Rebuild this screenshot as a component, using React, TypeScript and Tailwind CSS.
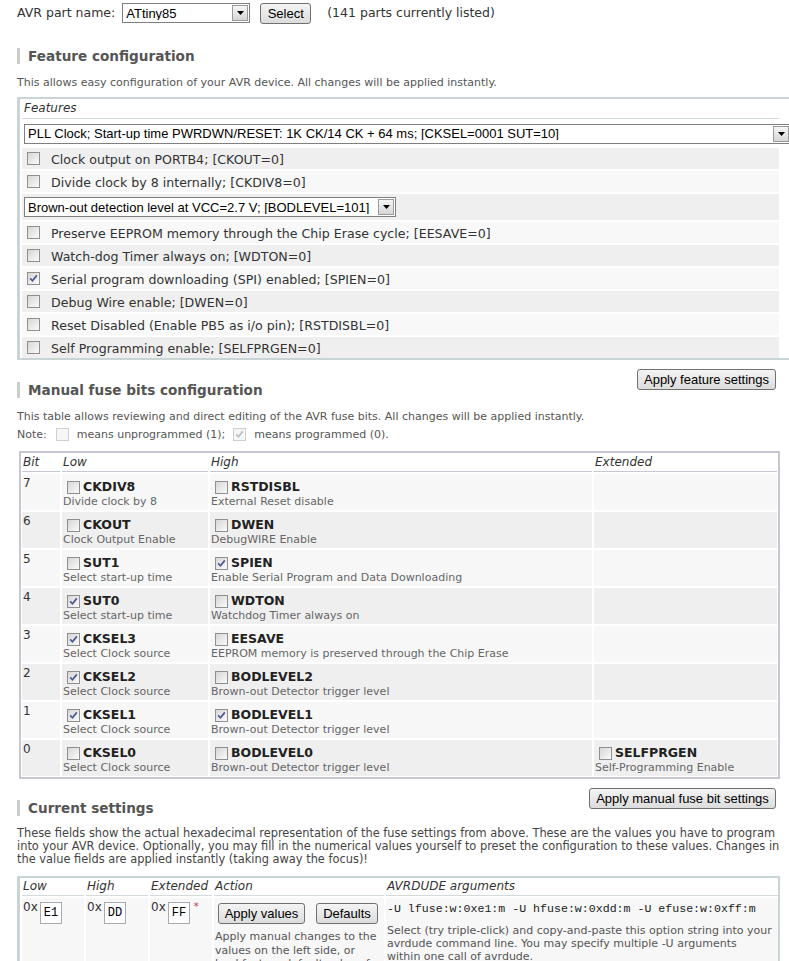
import type { ReactNode } from "react";

const FEATURES: { label: string; checked?: boolean; select?: boolean }[] = [
  { label: "Clock output on PORTB4; [CKOUT=0]" },
  { label: "Divide clock by 8 internally; [CKDIV8=0]" },
  { label: "Brown-out detection level at VCC=2.7 V; [BODLEVEL=101]", select: true },
  { label: "Preserve EEPROM memory through the Chip Erase cycle; [EESAVE=0]" },
  { label: "Watch-dog Timer always on; [WDTON=0]" },
  { label: "Serial program downloading (SPI) enabled; [SPIEN=0]", checked: true },
  { label: "Debug Wire enable; [DWEN=0]" },
  { label: "Reset Disabled (Enable PB5 as i/o pin); [RSTDISBL=0]" },
  { label: "Self Programming enable; [SELFPRGEN=0]" },
];

type Bit = { name: string; desc: string; checked?: boolean } | null;

const BITS: { bit: number; low: Bit; high: Bit; ext: Bit }[] = [
  { bit: 7, low: { name: "CKDIV8", desc: "Divide clock by 8" }, high: { name: "RSTDISBL", desc: "External Reset disable" }, ext: null },
  { bit: 6, low: { name: "CKOUT", desc: "Clock Output Enable" }, high: { name: "DWEN", desc: "DebugWIRE Enable" }, ext: null },
  { bit: 5, low: { name: "SUT1", desc: "Select start-up time" }, high: { name: "SPIEN", desc: "Enable Serial Program and Data Downloading", checked: true }, ext: null },
  { bit: 4, low: { name: "SUT0", desc: "Select start-up time", checked: true }, high: { name: "WDTON", desc: "Watchdog Timer always on" }, ext: null },
  { bit: 3, low: { name: "CKSEL3", desc: "Select Clock source", checked: true }, high: { name: "EESAVE", desc: "EEPROM memory is preserved through the Chip Erase" }, ext: null },
  { bit: 2, low: { name: "CKSEL2", desc: "Select Clock source", checked: true }, high: { name: "BODLEVEL2", desc: "Brown-out Detector trigger level" }, ext: null },
  { bit: 1, low: { name: "CKSEL1", desc: "Select Clock source", checked: true }, high: { name: "BODLEVEL1", desc: "Brown-out Detector trigger level", checked: true }, ext: null },
  { bit: 0, low: { name: "CKSEL0", desc: "Select Clock source" }, high: { name: "BODLEVEL0", desc: "Brown-out Detector trigger level" }, ext: { name: "SELFPRGEN", desc: "Self-Programming Enable" } },
];

function Box({ checked, dim }: { checked?: boolean; dim?: boolean }) {
  return (
    <span
      className={`inline-flex h-[13px] w-[13px] shrink-0 items-center justify-center border ${
        dim
          ? "border-[#cfcfcf] bg-[#f6f6f6]"
          : "border-[#8e8f8f] bg-linear-to-br from-[#d6d6d6] to-[#fbfbfb]"
      }`}
    >
      {checked && (
        <svg width="9" height="9" viewBox="0 0 9 9">
          <path d="M1.2 4.4 L3.5 6.8 L7.8 1.4" fill="none" stroke={dim ? "#bdbdbd" : "#4b5a8f"} strokeWidth="1.7" />
        </svg>
      )}
    </span>
  );
}

function Button({ children, className = "" }: { children: ReactNode; className?: string }) {
  return (
    <button
      className={`flex h-[21px] shrink-0 items-center justify-center whitespace-nowrap rounded-[3px] border border-[#707070] bg-linear-to-b from-[#f4f4f4] to-[#dcdcdc] px-0 font-['Liberation_Sans',Arial,sans-serif] text-[13px] leading-none text-black ${className}`}
    >
      {children}
    </button>
  );
}

function Select({ value, className = "" }: { value: string; className?: string }) {
  return (
    <div className={`flex h-[20px] items-center border border-[#7f7f7f] bg-white ${className}`}>
      <span className="flex-1 truncate pl-[3px] font-['Liberation_Sans',Arial,sans-serif] text-[13px] leading-none text-black">
        {value}
      </span>
      <span className="mr-[1px] flex h-[16px] w-[16px] items-center justify-center border border-[#9a9a9a] bg-linear-to-b from-[#f6f6f6] to-[#d6d6d6]">
        <svg width="7" height="4" viewBox="0 0 7 4">
          <path d="M0 0h7L3.5 4z" fill="#000" />
        </svg>
      </span>
    </div>
  );
}

function Heading({ children, className = "" }: { children: ReactNode; className?: string }) {
  return (
    <h2 className={`whitespace-nowrap border-l-[3px] border-[#cccccc] pl-[8px] text-[13.6px] font-bold leading-[16px] text-[#555] ${className}`}>
      {children}
    </h2>
  );
}

function BitCell({ b, shade }: { b: Bit; shade: string }) {
  return (
    <div className={`${shade} pl-[1px]`}>
      {b && (
        <>
          <div className="mt-[6px] flex items-center gap-[3px] pl-[4px]">
            <Box checked={b.checked} />
            <span className="text-[12.5px] font-bold leading-[14px] text-[#222]">{b.name}</span>
          </div>
          <div className="mt-[1px] whitespace-nowrap text-[11px] leading-[13px] text-[#666]">{b.desc}</div>
        </>
      )}
    </div>
  );
}

export default function App() {
  return (
    <div className="min-h-[961px] w-[789px] overflow-hidden bg-white pl-[17px] pt-[3px] font-['DejaVu_Sans',Verdana,sans-serif] text-[#333]">
      <div className="flex h-[20px] items-center text-[12.5px]">
        <span>AVR part name:</span>
        <Select value="ATtiny85" className="ml-[7px] w-[128px]" />
        <Button className="ml-[10px] h-[20px] w-[51px]">Select</Button>
        <span className="ml-[16px]">(141 parts currently listed)</span>
      </div>

      <Heading className="mt-[25px]">Feature configuration</Heading>
      <p className="mt-[12px] text-[11px] leading-[13px] text-[#555]">
        This allows easy configuration of your AVR device. All changes will be applied instantly.
      </p>

      <div className="mt-[8px] w-[772px] border-y-2 border-l-[3px] border-[#c9d4d6] pl-[2px]">
        <div className="mr-[10px] flex flex-col gap-[2px]">
          <div className="h-[20px] border-b border-[#d3dadc] pl-[2px] text-[12px] italic leading-[19px]">Features</div>
          <div className="flex h-[25px] items-center bg-white pl-[2px]">
            <Select
              value="PLL Clock; Start-up time PWRDWN/RESET: 1K CK/14 CK + 64 ms; [CKSEL=0001 SUT=10]"
              className="-mr-[12px] w-[769px]"
            />
          </div>
          {FEATURES.map((f, i) => (
            <div
              key={f.label}
              className={`flex items-center ${f.select ? "h-[26px] pl-[2px]" : "h-[21px] pl-[5px]"} ${
                i % 2 === 0 ? "bg-[#efefef]" : "bg-[#f8f8f8]"
              }`}
            >
              {f.select ? (
                <Select value={f.label} className="w-[372px]" />
              ) : (
                <>
                  <Box checked={f.checked} />
                  <span className="ml-[11px] mt-[2px] whitespace-nowrap text-[12.6px] leading-[15px]">{f.label}</span>
                </>
              )}
            </div>
          ))}
        </div>
      </div>

      <div className="mr-[13px] mt-[9px] flex items-start justify-between">
        <Heading className="mt-[13px]">Manual fuse bits configuration</Heading>
        <Button className="w-[139px]">Apply feature settings</Button>
      </div>
      <p className="mt-[12px] text-[11px] leading-[13px] text-[#555]">
        This table allows reviewing and direct editing of the AVR fuse bits. All changes will be applied instantly.
      </p>
      <div className="mt-[5px] flex h-[13px] items-center text-[11px] leading-[13px] text-[#555]">
        <span>Note:</span>
        <span className="ml-[9px] flex"><Box dim /></span>
        <span className="ml-[8px]">means unprogrammed (1);</span>
        <span className="ml-[8px] flex"><Box dim checked /></span>
        <span className="ml-[8px]">means programmed (0).</span>
      </div>

      <div className="ml-[2px] mt-[10px] w-[761px] border-2 border-[#c6c6d4] p-[1px]">
        <div className="grid grid-cols-[38px_146px_382px_183px] gap-[2px]">
          {["Bit", "Low", "High", "Extended"].map((h) => (
            <div key={h} className="h-[18px] border-b border-[#c6c6d4] pl-[1px] text-[12px] italic leading-[17px]">
              {h}
            </div>
          ))}
          {BITS.map((r, i) => {
            const shade = i % 2 === 0 ? "bg-[#f7f7f7]" : "bg-[#efefef]";
            return [
              <div key={`b${r.bit}`} className={`${shade} h-[36px] pl-[1px] pt-[2px] text-[12px] leading-[14px]`}>
                {r.bit}
              </div>,
              <BitCell key={`l${r.bit}`} b={r.low} shade={shade} />,
              <BitCell key={`h${r.bit}`} b={r.high} shade={shade} />,
              <BitCell key={`e${r.bit}`} b={r.ext} shade={shade} />,
            ];
          })}
        </div>
      </div>

      <div className="mr-[13px] mt-[9px] flex items-start justify-between">
        <Heading className="mt-[12px]">Current settings</Heading>
        <Button className="w-[187px]">Apply manual fuse bit settings</Button>
      </div>
      <p className="mt-[11px] whitespace-nowrap text-[11.4px] leading-[13px] text-[#444]">
        These fields show the actual hexadecimal representation of the fuse settings from above. These are the values you have to program
        <br />
        into your AVR device. Optionally, you may fill in the numerical values yourself to preset the configuration to these values. Changes in
        <br />
        the value fields are applied instantly (taking away the focus)!
      </p>

      <div className="mt-[10px] w-[763px] border-l-[3px] border-r-2 border-t-2 border-[#c9d4d6] pl-[2px]">
        <div className="grid grid-cols-[62px_62px_62px_170px_1fr] gap-[2px]">
          {["Low", "High", "Extended", "Action", "AVRDUDE arguments"].map((h) => (
            <div key={h} className="h-[18px] whitespace-nowrap border-b border-[#d3dadc] pl-[1px] text-[12px] italic leading-[17px]">
              {h}
            </div>
          ))}

          {[
            ["E1", false],
            ["DD", false],
            ["FF", true],
          ].map(([v, star]) => (
            <div key={v as string} className="flex h-[70px] items-start bg-[#f7f7f7] pl-[1px] pt-[2px] text-[12px]">
              <span className="leading-[14px]">0x</span>
              <span className="ml-[2px] mt-[2px] flex h-[22px] w-[22px] items-center border border-[#a5acb2] bg-white pl-[3px] font-['Liberation_Mono',monospace] text-[12px] text-black">
                {v as string}
              </span>
              {star && <span className="ml-[4px] mt-[2px] text-[10px] leading-[10px] text-[#cc3355]">*</span>}
            </div>
          ))}

          <div className="bg-[#f7f7f7] pl-[1px]">
            <div className="mt-[5px] flex items-center gap-[11px] pl-[3px]">
              <Button className="w-[87px]">Apply values</Button>
              <Button className="w-[62px]">Defaults</Button>
            </div>
            <p className="mt-[6px] whitespace-nowrap text-[11px] leading-[13.5px] text-[#555]">
              Apply manual changes to the
              <br />
              values on the left side, or
              <br />
              load factory default values for
            </p>
          </div>

          <div className="bg-[#f7f7f7] pl-[1px]">
            <div className="mt-[4px] whitespace-nowrap font-['Liberation_Mono',monospace] text-[11.6px] leading-[14px] text-[#222]">
              -U lfuse:w:0xe1:m -U hfuse:w:0xdd:m -U efuse:w:0xff:m
            </div>
            <p className="mt-[8px] whitespace-nowrap text-[11px] leading-[13px] text-[#555]">
              Select (try triple-click) and copy-and-paste this option string into your
              <br />
              avrdude command line. You may specify multiple -U arguments
              <br />
              within one call of avrdude.
            </p>
          </div>
        </div>
      </div>
    </div>
  );
}
